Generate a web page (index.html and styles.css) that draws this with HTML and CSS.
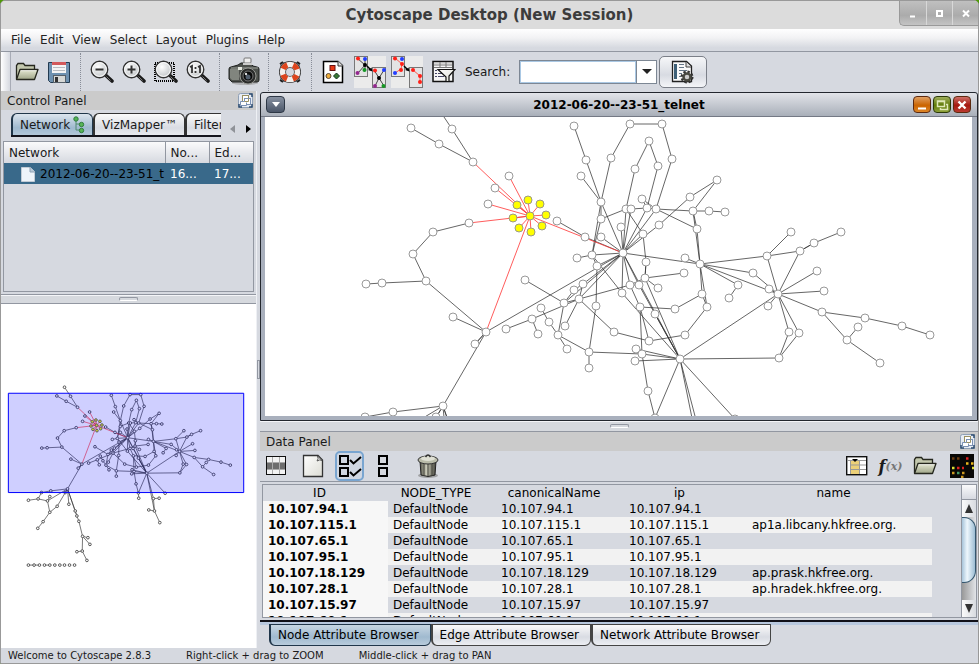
FILE: index.html
```html
<!DOCTYPE html>
<html lang="en">
<head>
<meta charset="utf-8">
<title>Cytoscape Desktop (New Session)</title>
<link rel="stylesheet" href="styles.css">
</head>
<body>
<svg class="defs" aria-hidden="true">
  <defs>
    <linearGradient id="gFolder" x1="0" y1="0" x2="0" y2="1"><stop offset="0" stop-color="#e6e9d4"/><stop offset="1" stop-color="#9fa588"/></linearGradient>
    <linearGradient id="gPage" x1="0" y1="0" x2="1" y2="1"><stop offset="0" stop-color="#fff"/><stop offset="1" stop-color="#dcdcd4"/></linearGradient>
    <radialGradient id="gLens" cx=".4" cy=".35"><stop offset="0" stop-color="#fff"/><stop offset="1" stop-color="#cfd2d4"/></radialGradient>
    <linearGradient id="gCan"><stop offset="0" stop-color="#55554a"/><stop offset=".4" stop-color="#c9c9b8"/><stop offset="1" stop-color="#45453c"/></linearGradient>
    <symbol id="folder" viewBox="0 0 24 20">
      <path d="M1.5 17V3.5L3 1.500H8.500L10 3.500H19.500V7" fill="#c3c8ae" stroke="#25271e" stroke-width="1.300"/>
      <path d="M1.500 17.500L5 7.500H23L19.500 17.500Z" fill="url(#gFolder)" stroke="#25271e" stroke-width="1.300" stroke-linejoin="round"/>
      <path d="M5.700 8.700H21.500" stroke="#fff" opacity=".7"/>
    </symbol>
    <symbol id="lens" viewBox="0 0 24 24">
      <path d="M15.500 15L22 21" stroke="#1a1a1a" stroke-width="3.600" stroke-linecap="round"/>
      <path d="M16.500 16.500L20.500 20.500" stroke="#777" stroke-width="1"/>
      <circle cx="9.500" cy="9.500" r="8.200" fill="url(#gLens)" stroke="#333" stroke-width="1.500"/>
      <circle cx="9.500" cy="9.500" r="6.900" fill="none" stroke="#fff"/>
    </symbol>
    <symbol id="float" viewBox="0 0 15 15">
      <rect x=".5" y=".5" width="14" height="14" rx="2" fill="#e6ebf3" stroke="#8fa0b6"/>
      <path d="M1 11V14H4M11 1H14V4M14 11V14H11" fill="none" stroke="#2c4c70" stroke-width="1.500"/>
      <rect x="4.500" y="2.500" width="6" height="6" fill="#fff" stroke="#9a9062"/>
      <rect x="6.500" y="5.500" width="6" height="6" fill="#fff" stroke="#7b91b4"/>
      <path d="M6.500 8.500H2.500V12.500H8.500V9.500" fill="#fff" stroke="#7b91b4"/>
      <path d="M6.500 8.500H10.500V5.500" fill="none" stroke="#9a9062"/>
    </symbol>
  </defs>
</svg>

<div class="window">
  <header class="titlebar">
    <h1>Cytoscape Desktop (New Session)</h1>
    <div class="wm-buttons">
      <button aria-label="Minimize"><svg width="16" height="16"><path d="M5 11.500H10" stroke="#fff" stroke-width="2"/></svg></button>
      <button aria-label="Maximize"><svg width="16" height="16"><rect x="5" y="6" width="5" height="5" fill="none" stroke="#fff" stroke-width="2"/></svg></button>
      <button aria-label="Close"><svg width="16" height="16"><path d="M5 5.500L11 11.500M11 5.500L5 11.500" stroke="#fff" stroke-width="2"/></svg></button>
    </div>
  </header>

  <nav class="menubar">
    <a href="#">File</a><a href="#">Edit</a><a href="#">View</a><a href="#">Select</a><a href="#">Layout</a><a href="#">Plugins</a><a href="#">Help</a>
  </nav>

  <div class="toolbar">
    <div class="grip"></div>
    <div class="group">
      <button class="tool" aria-label="Open session"><svg width="24" height="20"><use href="#folder"/></svg></button>
      <button class="tool" aria-label="Save session"><svg width="22" height="22">
        <path d="M.500 1.500H21.500V21.500H2.500L.500 19.500Z" fill="#6e91b0" stroke="#223a50"/>
        <rect x="4" y="1" width="14" height="11" fill="#f4f4f4"/><rect x="4" y="1" width="14" height="3" fill="#d2595b"/>
        <path d="M5 6.500H17M5 9.500H17" stroke="#b9bcc0"/>
        <rect x="5.500" y="14.500" width="12" height="7" fill="#d6d8d6" stroke="#55606a"/><rect x="7" y="16" width="3" height="5" fill="#333"/>
      </svg></button>
    </div>
    <div class="sep"></div>
    <div class="group">
      <button class="tool" aria-label="Zoom out"><svg width="24" height="24"><use href="#lens"/><path d="M5.500 9.500H13.500" stroke="#333" stroke-width="2"/></svg></button>
      <button class="tool" aria-label="Zoom in"><svg width="24" height="24"><use href="#lens"/><path d="M5.500 9.500H13.500M9.500 5.500V13.500" stroke="#333" stroke-width="2"/></svg></button>
      <button class="tool" aria-label="Zoom selected region"><svg width="24" height="24"><rect x="1" y="3" width="19" height="18" fill="none" stroke="#000" stroke-width="2" stroke-dasharray="1 1"/><use href="#lens"/></svg></button>
      <button class="tool" aria-label="Zoom to actual size"><svg width="24" height="24"><use href="#lens"/><path d="M4 7L6 6V13M12 7L14 6V13M9.500 7V9M9.500 11V13" fill="none" stroke="#333" stroke-width="1.800"/></svg></button>
    </div>
    <div class="sep"></div>
    <div class="group wide">
      <button class="tool" aria-label="Export image"><svg width="32" height="30">
        <ellipse cx="17" cy="26" rx="13" ry="2" fill="#999" opacity=".6"/>
        <path d="M1 12Q1 10 3 10L10 8L13 6H22L25 9L29 10Q31 10 31 12V23Q31 25 29 25H4L1 22Z" fill="#4d504c" stroke="#1f211f"/>
        <path d="M2 12H11V23H4L2 21Z" fill="#81857e"/><path d="M3 11H30" stroke="#9fa39c"/>
        <rect x="16" y="1" width="7" height="5" rx="1" fill="#eee" stroke="#777"/><path d="M15 7H24" stroke="#ccc" stroke-width="2"/>
        <rect x="10" y="10" width="4" height="3" fill="#e5e8e0"/>
        <circle cx="20" cy="19" r="8" fill="#2a2b2a" stroke="#999b96"/><circle cx="20" cy="19" r="5" fill="#080808" stroke="#777"/>
        <circle cx="20" cy="20" r="2.500" fill="#515d6c"/><circle cx="18" cy="17" r="1.200" fill="#ddd"/>
      </svg></button>
    </div>
    <div class="sep"></div>
    <div class="group">
      <button class="tool" aria-label="Help"><svg width="24" height="24">
        <path d="M3 3H21V21H3Z" fill="none" stroke="#333"/><path d="M2 4L5 2M19 2L22 4M2 20L5 22M19 22L22 20" stroke="#222" stroke-width="2"/>
        <circle cx="12" cy="12" r="7.500" fill="none" stroke="#333" stroke-width="7"/>
        <circle cx="12" cy="12" r="7.500" fill="none" stroke="#f4f0ec" stroke-width="5.500"/>
        <circle cx="12" cy="12" r="7.500" fill="none" stroke="#dd451d" stroke-width="5.500" stroke-dasharray="5.900 5.900" stroke-dashoffset="2.950" transform="rotate(45 12 12)"/>
      </svg></button>
    </div>
    <div class="sep"></div>
    <div class="group spaced">
      <button class="tool" aria-label="Visual styles"><svg width="22" height="24">
        <path d="M1.500 1.500H16L20.500 5.500V22.500H1.500Z" fill="#fff" stroke="#000" stroke-width="1.500"/><path d="M16 1V6H21" fill="#ddd" stroke="#333"/>
        <rect x="8" y="5.500" width="5" height="5" fill="#e83916" stroke="#611"/><circle cx="6.500" cy="16" r="2.500" fill="#efae3c" stroke="#543"/><path d="M14.500 13L17.500 16L14.500 19L11.500 16Z" fill="#387832" stroke="#132"/>
      </svg></button>
      <button class="tool" aria-label="New network from selected nodes, all edges"><svg width="32" height="32">
        <rect width="32" height="32" fill="#ebebeb"/><rect x=".5" y=".5" width="13" height="20" fill="#e4e4e4" stroke="#777"/><rect x="18.500" y="11.500" width="13" height="20" fill="#e4e4e4" stroke="#777"/>
        <path d="M3 2L11 9L4 17M11 2V14M20 14L25 22L30 14M21 30L25 22L30 30" fill="none" stroke="#444"/>
        <path d="M13 10L16 13" stroke="#000" stroke-width="1.500"/><path d="M18.500 15.500L14 14L17.500 11.500Z"/>
        <circle cx="11" cy="9" r="2"/><circle cx="25" cy="22" r="2"/>
        <g fill="#ff2018"><circle cx="4" cy="2.500" r="2"/><circle cx="21" cy="14.500" r="2"/></g><g fill="#233eff"><circle cx="11" cy="3" r="2"/><circle cx="30" cy="14" r="2"/></g>
        <g fill="#93278f"><circle cx="3.500" cy="17" r="2"/><circle cx="21" cy="30" r="2"/></g><g fill="#159825"><circle cx="10.500" cy="14" r="2"/><circle cx="29.500" cy="30" r="2"/></g>
      </svg></button>
      <button class="tool" aria-label="New network from selected nodes and edges"><svg width="32" height="32">
        <rect width="32" height="32" fill="#ebebeb"/><rect x=".5" y=".5" width="13" height="20" fill="#e4e4e4" stroke="#777"/><rect x="18.500" y="11.500" width="13" height="20" fill="#e4e4e4" stroke="#777"/>
        <path d="M4 2L11 8L10 13L4 17M22 14L29 20V26" fill="none" stroke="#ff5a50"/>
        <path d="M13 10L16 13" stroke="#000" stroke-width="1.500"/><path d="M18.500 15.500L14 14L17.500 11.500Z"/>
        <g fill="#ff2018"><circle cx="4" cy="2.500" r="2"/><circle cx="11" cy="8" r="2"/><circle cx="10" cy="14" r="2"/><circle cx="22" cy="14" r="2"/><circle cx="29" cy="20" r="2"/><circle cx="29" cy="26" r="2"/></g>
        <g fill="#233eff"><circle cx="11" cy="3" r="2"/><circle cx="4" cy="17" r="2"/></g>
      </svg></button>
      <button class="tool" aria-label="Filters"><svg width="24" height="24">
        <rect x="1" y="1.500" width="20" height="20" fill="#f6f6f6" stroke="#111" stroke-width="1.500"/><path d="M2 3.500H20V6H2Z" fill="#b8b8b8"/><path d="M8 2V7M14 2V7M2 7.500H20" stroke="#777"/>
        <path d="M3 10.500H5M3 13.500H5M3 16.500H5M6 13.500H11M6 16.500H12" stroke="#446"/>
        <path d="M6 9.500H23L17 16V21.500H14V17Z" fill="url(#gPage)" stroke="#111" stroke-width="1.200"/>
      </svg></button>
    </div>
    <label for="search">Search:</label>
    <div class="combo">
      <input id="search" type="text">
      <button aria-label="Show search choices"><svg width="10" height="6"><path d="M0 0H10L5 5Z" fill="#222"/></svg></button>
    </div>
    <button class="config" aria-label="Configure search options"><svg width="24" height="24">
      <path d="M1.500 1.500H15.500L20.500 6V21.500H1.500Z" fill="#fafafa" stroke="#222" stroke-width="1.300"/><rect x="3" y="4" width="3" height="15" fill="#3e6078"/>
      <path d="M15 2V7H20" fill="#ddd" stroke="#444"/><path d="M8 4.500H13M8 7.500H13M8 10.500H16M8 13.500H11M8 16.500H10" stroke="#678"/>
      <circle cx="16" cy="17" r="5" fill="none" stroke="#333" stroke-width="3" stroke-dasharray="2.200 1.700"/><circle cx="16" cy="17" r="3.500" fill="#ccc" stroke="#484840" stroke-width="2.500"/>
    </svg></button>
  </div>

  <main class="workspace">
    <section class="control">
      <div class="panel-title"><h2>Control Panel</h2><button aria-label="Float control panel"><svg width="15" height="15"><use href="#float"/></svg></button></div>
      <div class="tabs-row">
        <div class="tabs">
          <button class="tab active">Network <svg width="12" height="18"><path d="M3 3V14H8M3 8H8" fill="none" stroke="#4f8a70"/><g fill="#57b457" stroke="#2f7c3d"><circle cx="3" cy="3" r="2.200"/><circle cx="8.500" cy="8.500" r="2.200"/><circle cx="8.500" cy="14.500" r="2.200"/></g></svg></button>
          <button class="tab">VizMapper™</button>
          <button class="tab">Filters</button>
        </div>
        <div class="tab-arrows">
          <button aria-label="Previous tabs"><svg width="5" height="8"><path d="M5 0V8L0 4Z" fill="#8f9298"/></svg></button>
          <button aria-label="Next tabs"><svg width="5" height="8"><path d="M0 0V8L5 4Z"/></svg></button>
        </div>
      </div>
      <div class="tree">
        <table>
          <colgroup><col><col class="c-nodes"><col class="c-edges"></colgroup>
          <thead><tr><th>Network</th><th>No...</th><th>Ed...</th></tr></thead>
          <tbody><tr><td class="net"><svg width="14" height="16"><path d="M.500 1.500H9L13.500 5.500V15.500H.500Z" fill="#eef4fa" stroke="#c2ccd6"/><path d="M9 1V6H14" fill="#b9c9d8" stroke="#8ea2b5"/></svg>2012-06-20--23-51_t</td><td>16...</td><td>17...</td></tr></tbody>
        </table>
      </div>
      <div class="split"><i></i></div>
      <div class="overview"><svg id="overview" viewBox="244 -147 765 1029" preserveAspectRatio="xMinYMin slice" role="img" aria-label="Network overview"></svg></div>
    </section>

    <div class="vsplit"><i></i></div>

    <section class="right">
      <section class="frame">
        <div class="frame-title">
          <button class="frame-menu" aria-label="Frame menu"><svg width="8" height="6"><path d="M0 0H8L4 5Z" fill="#fff"/></svg></button>
          <h2>2012-06-20--23-51_telnet</h2>
          <div class="frame-buttons">
            <button class="min" aria-label="Minimize frame"><svg width="16" height="16"><path d="M4 11.500H12" stroke="#fff" stroke-width="2"/></svg></button>
            <button class="res" aria-label="Restore frame"><svg width="16" height="16"><path d="M3.500 4H10.500V9.500H3.500ZM3 4.500H11" fill="none" stroke="#dfe8b8" stroke-width="1.500"/><path d="M12 7.500H13.500V12.500H6.500V11" fill="none" stroke="#dfe8b8" stroke-width="1.500"/></svg></button>
            <button class="cls" aria-label="Close frame"><svg width="16" height="16"><path d="M4.500 4.500L11.500 11.500M11.500 4.500L4.500 11.500" stroke="#fff" stroke-width="2.400"/></svg></button>
          </div>
        </div>
        <div class="canvas"><svg id="network" role="img" aria-label="Network graph" viewBox="265 117 707 299" preserveAspectRatio="xMidYMid slice"></svg></div>
      </section>

      <div class="split wide-split"><i></i></div>

      <section class="data">
        <div class="panel-title"><h2>Data Panel</h2><button aria-label="Float data panel"><svg width="15" height="15"><use href="#float"/></svg></button></div>
        <div class="data-tools">
          <button aria-label="Select attributes"><svg width="20" height="20"><rect x=".5" y=".5" width="19" height="18" fill="#f3f3f3" stroke="#111"/><rect x="1" y="7" width="18" height="6" fill="#6d6d6d"/><path d="M6.500 1V18M13.500 1V18M1 6.500H19M1 13.500H19" stroke="#aaa"/></svg></button>
          <button aria-label="New attribute"><svg width="22" height="24"><path d="M1.500 1.500H16L20.500 6V22.500H1.500Z" fill="url(#gPage)" stroke="#333" stroke-width="1.300"/><path d="M15.500 2Q17 5 15 7Q18 5 20 6.500Z" fill="#fff" stroke="#555"/></svg></button>
          <button class="pressed" aria-label="Select all attributes"><svg width="24" height="24"><g fill="none" stroke="#000" stroke-width="2"><rect x="2" y="2" width="8" height="8"/><rect x="2" y="14" width="8" height="8"/><path d="M12 6L15.500 9.500L23 3M12 18L15.500 21.500L23 15"/></g></svg></button>
          <button class="narrow" aria-label="Unselect all attributes"><svg width="12" height="24"><g fill="none" stroke="#000" stroke-width="2"><rect x="2" y="2" width="8" height="8"/><rect x="2" y="14" width="8" height="8"/></g></svg></button>
          <button class="trash" aria-label="Delete attributes"><svg width="24" height="26">
            <ellipse cx="12" cy="22.500" rx="10" ry="2.500" fill="#888" opacity=".7"/><path d="M4 8H20L19 22Q12 25 5 22Z" fill="url(#gCan)" stroke="#222"/><path d="M8 10V23M12 10V23M16 10V23" stroke="#45453c"/>
            <ellipse cx="12" cy="7" rx="10" ry="4" fill="#b9bba9" stroke="#333"/><ellipse cx="12" cy="5.500" rx="7" ry="2.500" fill="#dfe0d4"/><path d="M9.500 4Q12 0 14.500 4" fill="none" stroke="#333" stroke-width="1.500"/></svg></button>
          <div class="tools-end">
            <button aria-label="Attribute table"><svg width="22" height="20"><rect x=".7" y=".7" width="20" height="18" fill="#fff" stroke="#111" stroke-width="1.400"/><rect x="5" y="4" width="8" height="14" fill="#ecd078"/><path d="M1 4.500H20M4.500 4V18M13.500 4V18M4 9H20M4 13.500H20" stroke="#999"/><path d="M6 3H12L9 6Z"/></svg></button>
            <button class="fx" aria-label="Function builder"><b>f</b><span>(x)</span></button>
            <button aria-label="Import"><svg width="24" height="20"><use href="#folder"/></svg></button>
            <button class="heat" aria-label="Heat map"><svg width="24" height="24"><rect width="24" height="24" fill="#080706"/><g stroke-width="2.500" stroke-dasharray="2.500 2.500" fill="none"><path d="M2 4.500H12" stroke="#6a3c12"/><path d="M16 4.500H19M7 14H14" stroke="#d22"/><path d="M16 9.500H24" stroke="#eab61b"/><path d="M2 14H5M22 14H24" stroke="#dd3"/><path d="M7 19H10" stroke="#496"/><path d="M12 19H15M2 19H5M11 23H14" stroke="#c92"/></g></svg></button>
          </div>
        </div>
        <div class="grid-box">
          <div class="grid-view">
            <table>
              <colgroup><col class="k1"><col class="k2"><col class="k3"><col class="k4"><col class="k5"><col></colgroup>
              <thead><tr><th>ID</th><th>NODE_TYPE</th><th>canonicalName</th><th>ip</th><th>name</th><td></td></tr></thead>
              <tbody>
                <tr><th>10.107.94.1</th><td>DefaultNode</td><td>10.107.94.1</td><td>10.107.94.1</td><td></td><td></td></tr>
                <tr><th>10.107.115.1</th><td>DefaultNode</td><td>10.107.115.1</td><td>10.107.115.1</td><td>ap1a.libcany.hkfree.org.</td><td></td></tr>
                <tr><th>10.107.65.1</th><td>DefaultNode</td><td>10.107.65.1</td><td>10.107.65.1</td><td></td><td></td></tr>
                <tr><th>10.107.95.1</th><td>DefaultNode</td><td>10.107.95.1</td><td>10.107.95.1</td><td></td><td></td></tr>
                <tr><th>10.107.18.129</th><td>DefaultNode</td><td>10.107.18.129</td><td>10.107.18.129</td><td>ap.prask.hkfree.org.</td><td></td></tr>
                <tr><th>10.107.28.1</th><td>DefaultNode</td><td>10.107.28.1</td><td>10.107.28.1</td><td>ap.hradek.hkfree.org.</td><td></td></tr>
                <tr><th>10.107.15.97</th><td>DefaultNode</td><td>10.107.15.97</td><td>10.107.15.97</td><td></td><td></td></tr>
                <tr><th>10.107.60.1</th><td>DefaultNode</td><td>10.107.60.1</td><td>10.107.60.1</td><td></td><td></td></tr>
              </tbody>
            </table>
          </div>
          <div class="scroll">
            <div class="corner"></div>
            <button aria-label="Scroll up"><svg width="8" height="9"><path d="M4 0L8 9H0Z" fill="#333"/></svg></button>
            <div class="track"><div class="thumb"></div></div>
            <button aria-label="Scroll down"><svg width="8" height="9"><path d="M4 9L8 0H0Z" fill="#333"/></svg></button>
          </div>
        </div>
        <div class="bottom-tabs">
          <button class="btab active">Node Attribute Browser</button><button class="btab">Edge Attribute Browser</button><button class="btab">Network Attribute Browser</button>
        </div>
      </section>
    </section>
  </main>

  <footer class="status"><span>Welcome to Cytoscape 2.8.3</span><span>Right-click + drag to ZOOM</span><span>Middle-click + drag to PAN</span></footer>
</div>
<script src="graph.js"></script>
</body>
</html>
```
FILE: styles.css
```css
* { box-sizing: border-box; }
body { margin: 0; background: #4e9a06; font-family: "DejaVu Sans", sans-serif; font-size: 12px; color: #1a1a1a; }
button { margin: 0; padding: 0; border: 0; background: none; font: inherit; color: inherit; display: flex; align-items: center; justify-content: center; }
h1, h2 { margin: 0; font-size: 12px; font-weight: normal; }
svg { display: block; flex: none; }
.defs { position: absolute; width: 0; height: 0; }
.window { height: 100vh; display: flex; flex-direction: column; background: #d6d9e0; border: 1px solid #999; border-radius: 5px 5px 0 0; overflow: hidden; }

.titlebar { position: relative; height: 28px; flex: none; background: #dcdcdc; display: flex; align-items: center; justify-content: center; }
.titlebar h1 { font-size: 15px; font-weight: bold; color: #3c3c3c; }
.wm-buttons { position: absolute; right: 0; top: 0; display: flex; height: 25px; background: linear-gradient(#c0c0c0, #ababab 60%, #c4c4c4); border: 1px solid #999; border-width: 0 0 1px 1px; border-radius: 0 0 0 5px; }
.wm-buttons button { width: 26px; border-left: 1px solid #d8d8d8; }
.wm-buttons button:first-child { border: 0; }

.menubar { height: 23px; flex: none; display: flex; gap: 9px; padding-left: 10px; align-items: center; background: linear-gradient(#fff, #f2f2f4 40%, #d6d9e0 85%); border-bottom: 1px solid #9297a1; }
.menubar a { color: #222; text-decoration: none; }

.toolbar { height: 39px; flex: none; display: flex; align-items: center; }
.grip { width: 10px; align-self: stretch; background: linear-gradient(90deg, #fff, #d6d9e0); border-right: 1px solid #a8acb6; }
.group { display: flex; }
.spaced { gap: 5px; }
.wide { padding: 0 3px; }
.tool { width: 32px; height: 36px; }
.sep { height: 38px; border-left: 1px dotted #888d98; margin: 0 5px; }
.toolbar label { margin: 0 9px 0 5px; }
.combo { display: flex; width: 138px; height: 24px; border: 1px solid #7d8794; background: #fff; }
.combo input { flex: 1; min-width: 0; border: 1px solid #aac8e4; background: #fff; font: inherit; outline: 0; }
.combo button { width: 20px; border-left: 1px solid #7d8794; }
.config { width: 48px; height: 32px; margin-left: 2px; border: 1px solid #7b7f88; border-radius: 5px; background: linear-gradient(#f6f7f9, #d8dbe2 60%, #f4f5f8); }

.workspace { flex: 1; min-height: 0; display: flex; }
.control { width: 255px; flex: none; display: flex; flex-direction: column; }
.panel-title { height: 19px; flex: none; background: #cbcbcb; display: flex; align-items: center; justify-content: space-between; padding: 0 3px 0 6px; }
.tabs-row { display: flex; height: 28px; padding: 3px 0 0 10px; flex: none; }
.tabs { display: flex; width: 210px; height: 24px; border-bottom: 2px solid #14141c; overflow: hidden; }
.tab { flex: none; height: 24px; padding: 0 7px 1px 7px; gap: 3px; border: 1px solid #333; border-left-width: 2px; border-bottom: 0; border-radius: 6px 6px 0 0; background: linear-gradient(#fafafa, #d9dce3 60%, #eceef2); white-space: nowrap; }
.tab.active { background: linear-gradient(#dce5ee, #9fb9cf 60%, #b8cbdb); border-color: #20364a; }
.tab-arrows { display: flex; gap: 11px; padding: 7px 0 0 9px; }
.tree { height: 151px; flex: none; margin: 3px 2px 0 2px; border: 1px solid #9297a1; }
.tree table { width: 100%; table-layout: fixed; border-collapse: collapse; }
.c-nodes, .c-edges { width: 44px; }
.tree th { height: 21px; padding: 0 5px; text-align: left; font-weight: normal; background: linear-gradient(#fafafb, #d6d9e0); border-right: 1px solid #9297a1; }
.tree th:last-child { border-right: 0; }
.tree td { height: 21px; padding: 0 5px; background: #39698a; color: #fff; white-space: nowrap; overflow: hidden; }
.tree .net { color: #000; display: flex; align-items: center; gap: 5px; padding: 0 0 0 17px; }
.split { height: 10px; flex: none; margin-top: 2px; border-top: 1px solid #9297a1; border-bottom: 1px solid #9297a1; background: #d6d9de; display: flex; align-items: center; justify-content: center; box-shadow: inset 0 1px #f4f5f8; }
.split i { width: 19px; height: 4px; border: 1px solid #9297a1; border-bottom-color: #fff; border-radius: 2px; background: #d6d9de; }
.overview { flex: 1; min-height: 0; background: #fff; overflow: hidden; }
.overview svg { width: 100%; height: 100%; }
.vsplit { width: 4px; flex: none; display: flex; align-items: center; border-left: 1px solid #eef0f4; }
.vsplit i { width: 3px; height: 19px; background: #d6d9e0; border: 1px solid #9297a1; }

.right { flex: 1; min-width: 0; display: flex; flex-direction: column; }
.frame { flex: 1; min-height: 0; margin: 1px 0 0; border: 1px solid #23272e; border-radius: 3px 3px 0 0; background: #a9b0bd; padding: 0 5px 4px 4px; display: flex; flex-direction: column; }
.frame-title { margin: 0 -5px 0 -4px; padding: 0 6px 0 5px; height: 24px; flex: none; display: flex; align-items: center; background: linear-gradient(#e2e4e9, #a9afb9); border-bottom: 1px solid #747985; border-radius: 3px 3px 0 0; }
.frame-title h2 { flex: 1; text-align: center; font-weight: bold; color: #000; padding-left: 40px; }
.frame-menu { width: 19px; height: 17px; border: 1px solid #2e3846; border-radius: 4px; background: linear-gradient(#8791a1, #4b5668); }
.frame-buttons { display: flex; gap: 2px; }
.frame-buttons button { width: 18px; height: 17px; border: 1px solid #5c2a10; border-radius: 4px; }
.min { background: linear-gradient(#e0a064, #cb6400 55%, #dc8526); }
.frame-buttons .res { background: linear-gradient(#9fae5c, #607b08 55%, #8da038); border-color: #2c3a0a; }
.cls { background: linear-gradient(#cf6f68, #a51810 55%, #bb3a30); }
.canvas { flex: 1; min-height: 0; background: #fff; overflow: hidden; }
.canvas svg { width: 100%; height: 100%; }
.wide-split { border: 0; height: 10px; margin: 0; }

.data { height: 217px; flex: none; display: flex; flex-direction: column; border-top: 1px solid #9297a1; }
.data-tools { height: 31px; flex: none; display: flex; align-items: center; padding: 0 2px 0 1px; gap: 8px; border-bottom: 1px solid #9297a1; }
.data-tools button { min-width: 29px; height: 30px; }
.data-tools .pressed { border: 2px solid #79a5d0; border-radius: 5px; background: #d0d7e2; }
.data-tools .narrow { min-width: 21px; }
.data-tools .trash { margin-left: 12px; }
.tools-end { display: flex; gap: 5px; margin-left: auto; }
.tools-end .heat { margin-left: 3px; }
.grow { flex: 1; }
.data-tools .fx { width: 29px; font-family: "DejaVu Serif", serif; font-style: italic; }
.fx b { font-size: 16px; }
.fx span { font-size: 11px; font-weight: bold; color: #777; }
.grid-box { flex: 1; min-height: 0; margin: 2px 1px 2px 2px; border: 1px solid #9297a1; display: flex; }
.grid-view { flex: 1; min-width: 0; overflow: hidden; }
.grid-view table { width: 100%; table-layout: fixed; border-collapse: collapse; color: #000; }
.k1 { width: 125px; } .k2 { width: 108px; } .k3 { width: 128px; } .k4 { width: 123px; } .k5 { width: 185px; }
.grid-view tr { height: 16px; }
.grid-view th, .grid-view td { padding: 0 0 0 5px; line-height: 16px; text-align: left; white-space: nowrap; }
.grid-view thead th { text-align: center; font-weight: normal; padding: 0 12px 0 0; }
.grid-view tbody th { background: #f7f7f7; }
.grid-view tbody tr:nth-child(even) td:not(:last-child) { background: #f2f2f2; }
.scroll { width: 15px; flex: none; display: flex; flex-direction: column; border-left: 1px solid #9297a1; }
.scroll button { height: 17px; background: linear-gradient(90deg, #fafafa, #d8dbe0); }
.corner { height: 15px; background: linear-gradient(#fafafb, #d6d9e0); border-bottom: 1px solid #9297a1; }
.track { flex: 1; background: linear-gradient(90deg, #999, #e2e4e8); overflow: hidden; }
.thumb { height: 80%; border: 1px solid #35576f; border-left: 0; border-radius: 0 12px 12px 0; background: linear-gradient(90deg, #a7c4da, #eef7fd 40%, #9dbdd4); }
.bottom-tabs { flex: none; display: flex; height: 28px; border-top: 2px solid #101018; padding: 2px 0 0 9px; background: linear-gradient(#b8c8de 3px, #d6d9e0 3px); }
.btab { height: 22px; padding: 0 11px 0 7px; border: 1px solid #444; border-left-width: 2px; border-radius: 0 0 6px 6px; background: linear-gradient(#fafafa, #d9dce3 60%, #eceef2); color: #000; white-space: nowrap; }
.btab.active { background: linear-gradient(#c7d6e3, #a0bacf 60%, #b8cbdb); border-color: #20364a; }
.status { height: 15px; flex: none; display: flex; align-items: center; gap: 35px; padding-left: 7px; font-size: 10px; }
.node { fill: #fff; stroke: #999; }
.node.sel { fill: #ff0; stroke: #998; }
.edge { stroke: #333; stroke-opacity: .75; }
.edge.hot { stroke: #f33; stroke-opacity: .8; }
#overview .node { stroke: #555; }
#overview .sel { stroke: #774; }
#overview * { vector-effect: non-scaling-stroke; }
#overview .edge { stroke-opacity: .65; }
.viewport { fill: #00f; fill-opacity: .19; stroke: #00f; }
```
FILE: graph.js
```js
const nodes = {
  a1:[411,128], a2:[439,144], a3:[473,162], a4:[452,129], a5:[434,102],
  b1:[509,176], b2:[495,188], b3:[488,204], c1:[469,223], c2:[433,232], c3:[413,254],
  d1:[426,281], d2:[382,283], d3:[366,284], H1:[486,332], d4:[453,317], d5:[475,344],
  H2:[443,406], k1:[393,412], k2:[365,417], m1:[525,280], m2:[506,329], m3:[532,319],
  m4:[538,334], m5:[541,308], m6:[549,322],
  e1:[574,126], e2:[586,160], e3:[581,176], e4:[601,202], e5:[611,158], e6:[630,124],
  e7:[662,124], e8:[672,159], e9:[649,141], e10:[635,169], e11:[658,166], e12:[626,209],
  e13:[631,209], e14:[642,199], e15:[647,208], e16:[656,209], e17:[601,219], e18:[621,227],
  e19:[601,237], e20:[643,234], e21:[659,225], e22:[690,197], e23:[717,180], e24:[693,211],
  e25:[709,211], e26:[725,212], e27:[697,229], e28:[557,221], e29:[585,237], H3:[623,253],
  e30:[592,255], e31:[577,258], e32:[597,266], e33:[646,262], e34:[685,258], H4:[700,264],
  f1:[791,232], f0:[767,256], f2:[800,251], f3:[814,243], f4:[841,232], f5:[817,271],
  f6:[824,291], H5:[778,294], f7:[753,273], f8:[769,289], f9:[768,306], f10:[822,312],
  f11:[865,318], f12:[902,326], f13:[930,335], f14:[858,327], f15:[847,340], f16:[880,363],
  f17:[789,332], f18:[799,333], f19:[779,358],
  g2:[583,284], g3:[574,290], g4:[564,303], g5:[579,299], g6:[565,326], g7:[558,335],
  g8:[567,349], g9:[589,352], g10:[589,368], g11:[596,306], g12:[614,332], g13:[622,293],
  g14:[630,285], g15:[639,285], g16:[645,278], g18:[658,288], g19:[684,273], g20:[640,307],
  g21:[655,314], g22:[675,309], g23:[702,294], g24:[707,307], g25:[685,335], g26:[649,341],
  g27:[636,349], g28:[642,354], g29:[635,361], H6:[680,359], g30:[648,391], g31:[655,418],
  g33:[738,285], g34:[729,298],
  p1:[656,434], p2:[735,419], p3:[700,435], p4:[717,434], p5:[703,472], p6:[686,469], p7:[719,507],
  q1:[355,436], q2:[326,440], q3:[383,442], q4:[390,429], q5:[390,476], q6:[412,458],
  q7:[370,504], q8:[354,524], q9:[436,417], q10:[447,452], q11:[466,472], q12:[471,487],
  q13:[477,503], q14:[488,548], q15:[504,552], q16:[510,572], q17:[487,592], q18:[471,594], q19:[501,620],
  r1:[326,634], r2:[343,634], r3:[359,634], r4:[374,634], r5:[390,634], r6:[405,634],
  r7:[420,634], r8:[434,634], r9:[449,634], r10:[464,634]
};
const selected = {
  Y:[530,216], y1:[517,205], y2:[528,200], y3:[540,204], y4:[546,215],
  y5:[542,226], y6:[531,232], y7:[519,228], y8:[513,218]
};
const paths = `a1 a2 a3 a4 a5|c1 c2 c3 d1 d2 d3|d1 H1 d4|H1 d5 H1 H2 k1 k2 q1 q2|H1 H3
m1 g4|m2 m3 m4|m3 g5|m5 m6 g7 g8|g7 g9 g10|g4 g7|g5 g6|g4 g3 g2 g5|g4 g5 H3|g4 H3|g5 g12 g26 g25 g24 g23
g5 g14 g16 g19|g16 g18|g16 e33|g14 g15 g16|e1 e2 e4 e3|e4 e5 e6 e7 e8 e16|e9 e10 e12|e9 e11 e15|e4 e17 e12
e4 H3 e12 e20 H3 e13 e15 e16 H3 e15 e14 e16|H3 e18|H3 e19|H3 e21 e22 e23 e24 e25 e26|e16 e24 e27 e16
e4 e30 e17|e28 e29 H3|e30 H3 e32|e30 e31|e30 e32 g11 g9|e20 e33 g16|e30 g13|H3 H4|H3 g13|H3 g2|H3 g14 g20|H3 g15 g21 H6
e24 H4 e27|H4 e34|H4 g23|H4 g24|H4 g33 g34|H4 f7|H4 f0|H4 H5|f0 f1|f0 f2 f3 f4|f3 f2|f0 H5 f2|H5 f5|H5 f6|H5 f7|H5 f8|H5 f9
H5 f10 f11 f12 f13|f10 f15 f14|f15 f16|H5 f17 f19 f18 H5|H5 H6 f19|g20 g22 g23|g20 g26|g20 g28|g13 H6 g16|H3 H6|g21 H6
g27 H6 g28|g29 H6|g9 g28|g28 g30 g31 H6|g31 p1|H6 p2|H6 p3 p4|H6 p5 p6|p3 p5 p7
H2 q3 q4|q1 q3 q5 q7 q8|q5 q6 H2|H2 q9|H2 q10|H2 q11 q12 q13 q14 q15|H2 q12|q14 q16|q14 q17 q18|q17 q19|r1 r2 r3|r4 r5`;
const hot = "Y a3|Y b1|Y b2|Y b3|Y c1|Y H1|Y H3|Y y1|Y y2|Y y3|Y y4|Y y5|Y y6|Y y7|Y y8";

const at = Object.assign({}, nodes, selected);

function lines(text, cls) {
  return text.split(/[|\n]/).map(path => {
    const points = path.trim().split(" ").map(id => at[id].join(","));
    return `<polyline class="${cls}" fill="none" points="${points.join(" ")}"/>`;
  }).join("");
}
function dots(set, cls) {
  return Object.values(set).map(([x, y]) => `<circle class="${cls}" cx="${x}" cy="${y}" r="4"/>`).join("");
}
const graph = lines(paths, "edge") + lines(hot, "edge hot") + dots(nodes, "node") + dots(selected, "node sel");
document.getElementById("network").innerHTML = graph;
document.getElementById("overview").innerHTML = graph + '<rect class="viewport" x="266" y="120" width="704" height="297"/>';
```
